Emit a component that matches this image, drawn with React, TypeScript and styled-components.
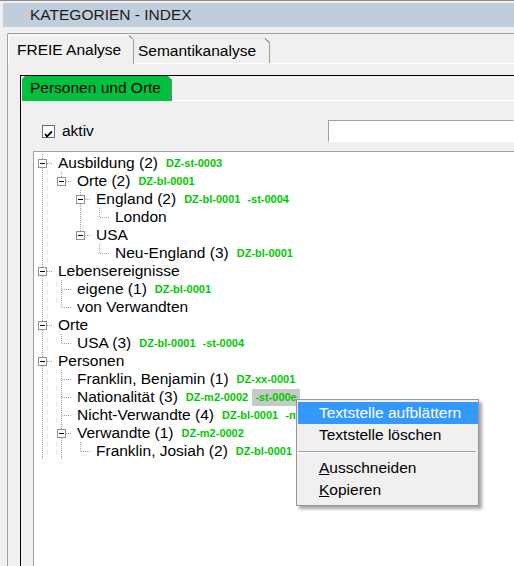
import styled, { createGlobalStyle } from "styled-components";

const Global = createGlobalStyle`
  * {
    box-sizing: border-box;
  }
  html,
  body {
    margin: 0;
    width: 514px;
    height: 566px;
    overflow: hidden;
    background: #f0f0f0;
    font-family: "Liberation Sans", Arial, sans-serif;
    font-size: 15.5px;
    color: #000;
  }
`;

const Window = styled.div`
  height: 566px;
  border-top: 1px solid #8c8c8c;
  padding-top: 2px;
  overflow: hidden;
`;

const TitleBar = styled.div`
  margin-left: 3px;
  height: 24px;
  line-height: 24px;
  padding-left: 27px;
  background: #c0cedb;
  color: #1c1c1c;
`;

const Group = styled.div`
  margin: 6px 0 0 7px;
  border-top: 1px solid #a0a0a0;
  border-left: 1px solid #a0a0a0;
  border-top-left-radius: 2px;
`;

const TabRow = styled.div`
  display: flex;
  align-items: flex-end;
  height: 28px;
  margin-top: 1px;
`;

const Tab = styled.div<{ $active?: boolean }>`
  position: relative;
  background: #f0f0f0;
  white-space: nowrap;
  border-right: 1px solid #a0a0a0;
  width: ${(p) => (p.$active ? "126px" : "136px")};
  height: ${(p) => (p.$active ? "29px" : "25px")};
  line-height: ${(p) => (p.$active ? "28px" : "24px")};
  margin-bottom: ${(p) => (p.$active ? "-1px" : "0")};
  z-index: ${(p) => (p.$active ? 1 : 0)};
  padding-left: ${(p) => (p.$active ? "8px" : "4px")};
  border-top: 1px solid ${(p) => (p.$active ? "#fff" : "#e3e3e3")};
  border-left: ${(p) => (p.$active ? "1px solid #fff" : "none")};

  &::after {
    content: "";
    position: absolute;
    top: -1px;
    right: -1px;
    width: 5px;
    height: 5px;
    background: linear-gradient(
      to top right,
      transparent 40%,
      #a0a0a0 40%,
      #a0a0a0 60%,
      #f0f0f0 60%
    );
  }
`;

const Panel = styled.div`
  border-top: 1px solid #fff;
  padding: 11px 0 0 12px;
`;

const InnerFrame = styled.div`
  border-top: 1px solid #000;
  border-left: 1px solid #000;
`;

const InnerTabs = styled.div`
  display: flex;
  height: 24px;
  padding-left: 1px;
`;

const GreenTab = styled.div`
  position: relative;
  z-index: 1;
  width: 150px;
  height: 25px;
  margin-bottom: -1px;
  padding-left: 8px;
  line-height: 24px;
  background: #00c040;
  box-shadow: inset -1px 0 0 #7a7a7a;
  clip-path: polygon(0 3px, 3px 0, calc(100% - 4px) 0, 100% 4px, 100% 100%, 0 100%);
`;

const InnerPanel = styled.div`
  border-top: 1px solid #fff;
  padding: 19px 0 0 12px;
`;

const Options = styled.div`
  display: grid;
  grid-template-columns: 295px 1fr;
  align-items: center;
  height: 22px;
`;

const CheckLabel = styled.label`
  display: flex;
  align-items: center;
  padding-left: 9px;
  gap: 7px;
`;

const CheckBox = styled.span`
  display: block;
  width: 13px;
  height: 13px;
  border: 1px solid #6d6d6d;
  background: #fff;
`;

const SearchInput = styled.input`
  height: 22px;
  width: 100%;
  border: 1px solid;
  border-color: #a0a0a0 #fff #fff #a0a0a0;
  background: #fff;
  outline: none;
`;

const Tree = styled.div`
  position: relative;
  margin-top: 9px;
  height: 430px;
  padding-top: 2px;
  background: #fff;
  border-top: 1px solid #a0a0a0;
  border-left: 1px solid #a0a0a0;
`;

const Row = styled.div`
  display: flex;
  align-items: center;
  height: 18px;
  white-space: nowrap;
`;

const GuideCell = styled.svg`
  display: block;
  flex: none;
  width: 19px;
  height: 18px;
`;

const Label = styled.span`
  margin-left: 5px;
`;

const Codes = styled.span`
  display: flex;
  gap: 7px;
  margin-left: 8px;
`;

const Code = styled.span<{ $hot?: boolean }>`
  font-size: 11px;
  font-weight: bold;
  color: #00c800;
  line-height: 17px;
  padding: ${(p) => (p.$hot ? "0 3px" : "0")};
  margin-left: ${(p) => (p.$hot ? "-3px" : "0")};
  background: ${(p) => (p.$hot ? "#c8c8c8" : "transparent")};
`;

const Menu = styled.div`
  position: absolute;
  left: 262px;
  top: 247px;
  width: 183px;
  height: 107px;
  padding: 2px 0 3px 1px;
  background: #f0f0f0;
  border: 1px solid #979797;
  box-shadow: 3px 3px 3px rgba(0, 0, 0, 0.35);
`;

const MenuItem = styled.div<{ $active?: boolean }>`
  height: 22px;
  line-height: 22px;
  padding-left: 21px;
  white-space: nowrap;
  background: ${(p) => (p.$active ? "#3399ff" : "transparent")};
  color: ${(p) => (p.$active ? "#fff" : "#000")};
`;

const Separator = styled.div`
  margin: 5px 2px 4px 0;
  border-top: 1px solid #a0a0a0;
  border-bottom: 1px solid #fff;
`;

type Code = { text: string; hot?: boolean };
type Node = { label: string; codes?: Code[]; kids?: Node[]; more?: boolean };

const data: Node[] = [
  {
    label: "Ausbildung (2)",
    codes: [{ text: "DZ-st-0003" }],
    kids: [
      {
        label: "Orte (2)",
        codes: [{ text: "DZ-bl-0001" }],
        kids: [
          {
            label: "England (2)",
            codes: [{ text: "DZ-bl-0001" }, { text: "-st-0004" }],
            kids: [{ label: "London" }],
          },
          {
            label: "USA",
            kids: [{ label: "Neu-England (3)", codes: [{ text: "DZ-bl-0001" }] }],
          },
        ],
      },
    ],
  },
  {
    label: "Lebensereignisse",
    kids: [
      { label: "eigene (1)", codes: [{ text: "DZ-bl-0001" }] },
      { label: "von Verwandten" },
    ],
  },
  {
    label: "Orte",
    kids: [{ label: "USA (3)", codes: [{ text: "DZ-bl-0001" }, { text: "-st-0004" }] }],
  },
  {
    label: "Personen",
    more: true,
    kids: [
      { label: "Franklin, Benjamin (1)", codes: [{ text: "DZ-xx-0001" }] },
      {
        label: "Nationalität (3)",
        codes: [{ text: "DZ-m2-0002" }, { text: "-st-000e", hot: true }],
      },
      {
        label: "Nicht-Verwandte (4)",
        codes: [{ text: "DZ-bl-0001" }, { text: "-nv-0004" }],
      },
      {
        label: "Verwandte (1)",
        more: true,
        codes: [{ text: "DZ-m2-0002" }],
        kids: [{ label: "Franklin, Josiah (2)", codes: [{ text: "DZ-bl-0001" }] }],
      },
    ],
  },
];

type FlatRow = { node: Node; trail: boolean[]; hasNext: boolean };

const flatten = (nodes: Node[], trail: boolean[]): FlatRow[] =>
  nodes.flatMap((node, i) => {
    const hasNext = i < nodes.length - 1 || !!node.more;
    const row: FlatRow = { node, trail, hasNext };
    return [row, ...flatten(node.kids ?? [], [...trail, hasNext])];
  });

const dots = { stroke: "#a0a0a0", strokeWidth: 1, strokeDasharray: "1 1" };

// one 19px column of the tree's connector lines
const Guide = ({ kind, box }: { kind: "pass" | "none" | "tee" | "elbow"; box?: boolean }) => (
  <GuideCell viewBox="0 0 19 18">
    {(kind === "pass" || kind === "tee") && <line x1="8.5" y1="0" x2="8.5" y2="18" {...dots} />}
    {kind === "elbow" && <line x1="8.5" y1="0" x2="8.5" y2="10" {...dots} />}
    {(kind === "tee" || kind === "elbow") && <line x1="9" y1="9.5" x2="19" y2="9.5" {...dots} />}
    {box && (
      <>
        <rect x="4.5" y="5.5" width="8" height="8" fill="#fff" stroke="#919191" />
        <line x1="6" y1="9.5" x2="11" y2="9.5" stroke="#000" />
      </>
    )}
  </GuideCell>
);

const rows = flatten(data, []);

const App = () => {
  return (
    <Window>
      <Global />
      <TitleBar>KATEGORIEN - INDEX</TitleBar>
      <Group>
        <TabRow>
          <Tab $active>FREIE Analyse</Tab>
          <Tab>Semantikanalyse</Tab>
        </TabRow>
        <Panel>
          <InnerFrame>
            <InnerTabs>
              <GreenTab>Personen und Orte</GreenTab>
            </InnerTabs>
            <InnerPanel>
              <Options>
                <CheckLabel>
                  <CheckBox>
                    <svg width="11" height="11" viewBox="0 0 11 11">
                      <path d="M2 5 L4 7.5 L9 2.5" fill="none" stroke="#000" strokeWidth="1.8" />
                    </svg>
                  </CheckBox>
                  aktiv
                </CheckLabel>
                <SearchInput type="text" />
              </Options>
              <Tree>
                {rows.map(({ node, trail, hasNext }, i) => (
                  <Row key={i}>
                    {trail.map((pass, k) => (
                      <Guide key={k} kind={pass ? "pass" : "none"} />
                    ))}
                    <Guide kind={hasNext ? "tee" : "elbow"} box={!!node.kids} />
                    <Label>{node.label}</Label>
                    {node.codes && (
                      <Codes>
                        {node.codes.map((c) => (
                          <Code key={c.text} $hot={c.hot}>
                            {c.text}
                          </Code>
                        ))}
                      </Codes>
                    )}
                  </Row>
                ))}
                <Menu>
                  <MenuItem $active>Textstelle aufblättern</MenuItem>
                  <MenuItem>Textstelle löschen</MenuItem>
                  <Separator />
                  <MenuItem>
                    <u>A</u>usschneiden
                  </MenuItem>
                  <MenuItem>
                    <u>K</u>opieren
                  </MenuItem>
                </Menu>
              </Tree>
            </InnerPanel>
          </InnerFrame>
        </Panel>
      </Group>
    </Window>
  );
};

export default App;
